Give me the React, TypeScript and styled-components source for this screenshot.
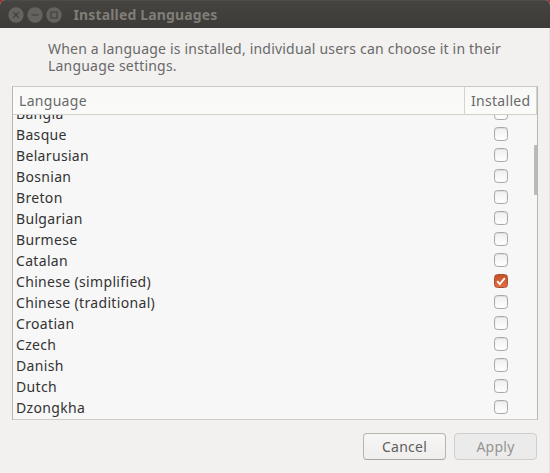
import React from "react";
import styled, { createGlobalStyle } from "styled-components";

const GlobalStyle = createGlobalStyle`
  *, *::before, *::after { box-sizing: border-box; }
  body { margin: 0; background: #a5282b; overflow: hidden; }
`;

const Window = styled.div`
  width: 550px;
  height: 473px;
  display: flex;
  flex-direction: column;
  overflow: hidden;
  border-radius: 5px 5px 0 0;
  background: #f2f1f0;
  color: #3c3c3c;
  font-family: "Noto Sans", "Open Sans", sans-serif;
  font-size: 14px;
`;

const TitleBar = styled.header`
  flex: none;
  height: 28px;
  display: flex;
  align-items: center;
  gap: 3px;
  padding: 0 7.5px;
  background: linear-gradient(#454440, #3c3b37);
  border-top: 1px solid #4d4c48;
`;

const WindowControl = styled.svg`
  display: block;
  width: 16px;
  height: 16px;
`;

const Title = styled.h1`
  margin: 1px 0 0 9px;
  color: #807d78;
  font-size: 14px;
  font-weight: 700;
  line-height: 20px;
  letter-spacing: 0.15px;
`;

const Content = styled.main`
  flex: 1;
  display: flex;
  flex-direction: column;
  padding: 12px 11px 13px 12px;
  border-right: 1px solid #e4e2e0;
`;

const Description = styled.p`
  height: 46px;
  margin: 0 0 0 36px;
  color: #696969;
  line-height: 17px;
  letter-spacing: 0.2px;
  white-space: nowrap;
`;

const LanguageTable = styled.section`
  height: 334px;
  display: flex;
  flex-direction: column;
  border: 1px solid #b9b5b1;
  border-top-color: #cdc9c2;
  border-bottom-color: #cdcbc8;
  background: #f7f7f7;
`;

const HeaderRow = styled.div`
  flex: none;
  height: 28px;
  display: flex;
  border-bottom: 1px solid #d1cfca;
  background: linear-gradient(#f8f8f7, #fbfbfa);
  color: #696969;
`;

const HeaderCell = styled.div<{ $width?: number }>`
  flex: ${({ $width }) => ($width ? `0 0 ${$width}px` : "1")};
  padding-left: 6px;
  border-right: 1px solid #d5d3ce;
  line-height: 27px;
  letter-spacing: 0.3px;
`;

const ScrollArea = styled.div`
  position: relative;
  flex: 1;
  display: flex;
  flex-direction: column;
  justify-content: flex-end;
  overflow: hidden;
  padding-bottom: 1px;
`;

const ScrollThumb = styled.div`
  position: absolute;
  top: 30px;
  right: 0;
  width: 3px;
  height: 50px;
  border-radius: 1px 0 0 1px;
  background: #bababa;
`;

const LanguageRow = styled.div`
  flex: none;
  height: 21px;
  display: flex;
  align-items: center;
  justify-content: space-between;
  padding: 0 29px 0 3px;
  line-height: 21px;
`;

const LanguageName = styled.span`
  color: #333;
  letter-spacing: 0.33px;
`;

const Checkbox = styled.span<{ $checked: boolean }>`
  flex: none;
  display: flex;
  width: 14px;
  height: 14px;
  margin-top: -1px;
  border: 1px solid ${({ $checked }) => ($checked ? "#a6502f" : "#aaa")};
  border-radius: 3.5px;
  background: ${({ $checked }) =>
    $checked ? "linear-gradient(#c94f25, #e06f44)" : "linear-gradient(#efefef, #fff)"};
  box-shadow: ${({ $checked }) => ($checked ? "none" : "inset 0 1px 0 #dedede, inset 0 0 1px #ccc")};
`;

const Actions = styled.footer`
  display: flex;
  justify-content: flex-end;
  gap: 8px;
  margin: 13px 1px 0 0;
`;

const Button = styled.button`
  width: 83px;
  height: 27px;
  padding: 0;
  border: 1px solid #b8b5b1;
  border-bottom-color: #a9a6a2;
  border-radius: 4px;
  background: linear-gradient(#f7f6f6, #efeeed);
  color: #605e5b;
  font: inherit;
  line-height: 23px;
  letter-spacing: 0.25px;

  &:disabled {
    border-color: #cfcecd;
    background: #ebebeb;
    color: #969492;
  }
`;

const languages = [
  "Bangla", "Basque", "Belarusian", "Bosnian", "Breton", "Bulgarian", "Burmese", "Catalan",
  "Chinese (simplified)", "Chinese (traditional)", "Croatian", "Czech", "Danish", "Dutch", "Dzongkha",
];

const controls = ["M5.2 5.2l5.6 5.6m0-5.6l-5.6 5.6", "M4.5 8h7", "M5 5h6v6H5z"];

export default function App() {
  return (
    <>
      <GlobalStyle />
      <Window>
        <TitleBar>
          {controls.map((d) => (
            <WindowControl key={d} viewBox="0 0 16 16">
              <circle cx="8" cy="8" r="7.7" fill="#65635d" />
              <path d={d} fill="none" stroke="#3e3d39" strokeWidth="1.1" />
            </WindowControl>
          ))}
          <Title>Installed Languages</Title>
        </TitleBar>
        <Content>
          <Description>
            When a language is installed, individual users can choose it in their
            <br />
            Language settings.
          </Description>
          <LanguageTable>
            <HeaderRow>
              <HeaderCell>Language</HeaderCell>
              <HeaderCell $width={72}>Installed</HeaderCell>
            </HeaderRow>
            <ScrollArea>
              {languages.map((name) => {
                const checked = name === "Chinese (simplified)";
                return (
                  <LanguageRow key={name}>
                    <LanguageName>{name}</LanguageName>
                    <Checkbox $checked={checked} role="checkbox" aria-checked={checked} aria-label={name}>
                      {checked && (
                        <svg width="12" height="12" viewBox="0 0 12 12">
                          <path d="M2.2 6.1l2.6 3 5-6" fill="none" stroke="#fff" strokeWidth="1.9" />
                        </svg>
                      )}
                    </Checkbox>
                  </LanguageRow>
                );
              })}
              <ScrollThumb />
            </ScrollArea>
          </LanguageTable>
          <Actions>
            <Button>Cancel</Button>
            <Button disabled>Apply</Button>
          </Actions>
        </Content>
      </Window>
    </>
  );
}
